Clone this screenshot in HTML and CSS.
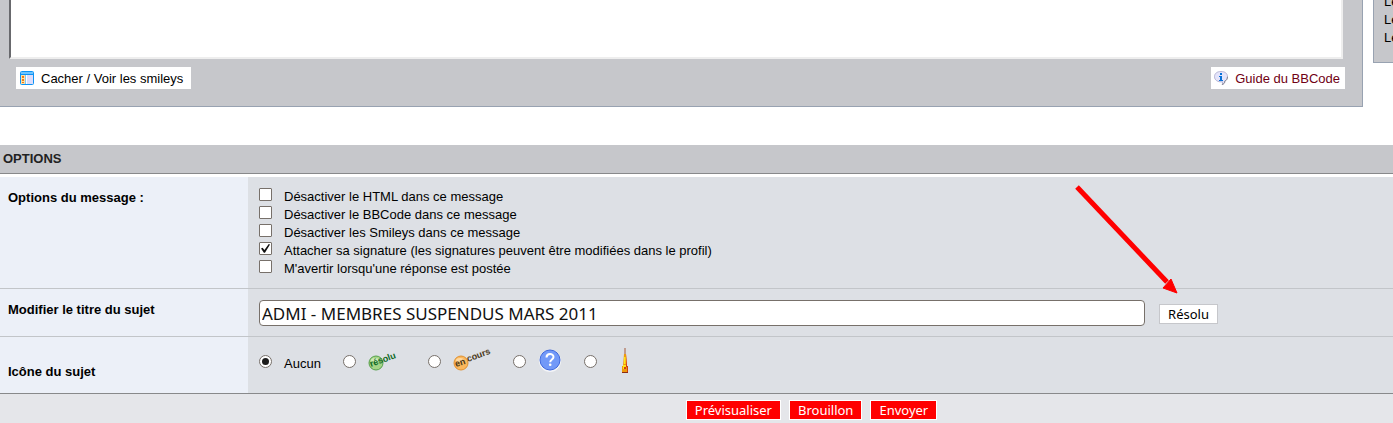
FILE: index.html
```html
<!DOCTYPE html>
<html lang="fr">
    <head>
        <meta charset="utf-8" />
        <title>Modifier le sujet</title>
        <link rel="stylesheet" href="styles.css">
    </head>
    <body>
        <form>
            <div class="top">
                <div class="editor">
                    <textarea class="message" aria-label="Message"></textarea>
                    <div class="editor-bar">
                        <button type="button" class="tool">
                            <svg width="14" height="14" viewBox="0 0 14 14">
                                <rect x="0.5" y="0.5" width="13" height="13" rx="1" fill="#fff" stroke="#0d93f5"/>
                                <path d="M1 1h12v2H1z" fill="#6cc4ff"/>
                                <path d="M1 3h12v1H1z" fill="#0d93f5"/>
                                <path d="M1 4h4v9H1z" fill="#ffe1a0"/>
                                <path d="M2 5h2v2H2zM2 8h2v2H2zM2 11h2v1H2z" fill="#f07818"/>
                                <path d="M5 4h1v9H5z" fill="#7cc6fa"/>
                                <path d="M7 4h6v9H7z" fill="#dcdcfa"/>
                            </svg>
                            <span>Cacher / Voir les smileys</span>
                        </button>
                        <a href="#" class="tool guide">
                            <svg width="14" height="14" viewBox="0 0 14 14">
                                <path d="M7 0.5c4 0 6.500 2 6.500 5.200 0 2.300-1.200 3.800-2.800 4.500 0.300 1.500-0.700 2.800-2.700 3.300 0.700-1 0.900-1.800 0.600-2.600C3.500 11.200 0.500 9 0.500 5.700 0.500 2.500 3 0.500 7 0.500z" fill="#e4e4fb" stroke="#b4b4d4"/>
                                <path d="M8 13.500c2-0.500 3-1.800 2.700-3.300 1.600-0.700 2.800-2.200 2.800-4.500" fill="none" stroke="#85858f"/>
                                <path d="M6 2h2v2H6zM5 5h3v4h1v1H5V9h1V6H5z" fill="#0872d8"/>
                            </svg>
                            <span>Guide du BBCode</span>
                        </a>
                    </div>
                </div>
                <div class="side">
                    <span>Le</span>
                    <span>Le</span>
                    <span>Le</span>
                </div>
            </div>

            <h2 class="title">OPTIONS</h2>

            <div class="row" role="group" aria-labelledby="message-options">
                <div class="name" id="message-options">Options du message :</div>
                <div class="value checks">
                    <label><input type="checkbox"><span>Désactiver le HTML dans ce message</span></label>
                    <label><input type="checkbox"><span>Désactiver le BBCode dans ce message</span></label>
                    <label><input type="checkbox"><span>Désactiver les Smileys dans ce message</span></label>
                    <label><input type="checkbox" checked><span>Attacher sa signature (les signatures peuvent être modifiées dans le profil)</span></label>
                    <label><input type="checkbox"><span>M'avertir lorsqu'une réponse est postée</span></label>
                </div>
            </div>

            <div class="row">
                <label class="name" for="subject">Modifier le titre du sujet</label>
                <div class="value subject-line">
                    <input type="text" class="subject" id="subject" value="ADMI - MEMBRES SUSPENDUS MARS 2011">
                    <div class="solved">
                        <button type="button" class="solved-button">Résolu</button>
                        <svg class="arrow" width="104" height="112" viewBox="0 0 104 112">
                            <path d="M3 3L93 98" stroke="#f00" stroke-width="5"/>
                            <path d="M103 109L89 104 97 95z" fill="#f00" stroke="#f00"/>
                        </svg>
                    </div>
                </div>
            </div>

            <div class="row last" role="group" aria-labelledby="topic-icon">
                <div class="name name-low" id="topic-icon">Icône du sujet</div>
                <div class="value icons">
                    <label><input type="radio" name="icon" checked><span>Aucun</span></label>
                    <label>
                        <input type="radio" name="icon" aria-label="Résolu">
                        <svg width="38" height="26" viewBox="0 0 38 26">
                            <circle cx="8" cy="15" r="7" fill="#a5d487" stroke="#55a04c"/>
                            <ellipse cx="7" cy="12" rx="4" ry="2" fill="#cdeab8"/>
                            <text class="stamp green" transform="translate(3 19) rotate(-20)">résolu</text>
                        </svg>
                    </label>
                    <label>
                        <input type="radio" name="icon" aria-label="En cours">
                        <svg width="38" height="26" viewBox="0 0 38 26">
                            <circle cx="8" cy="15" r="7" fill="#fbb75c" stroke="#df9233"/>
                            <ellipse cx="7" cy="12" rx="4" ry="2" fill="#ffd9a0"/>
                            <text class="stamp brown" transform="translate(3 19) rotate(-18)">en</text>
                            <text class="stamp brown" transform="translate(15 14) rotate(-20)">cours</text>
                        </svg>
                    </label>
                    <label>
                        <input type="radio" name="icon" aria-label="Question">
                        <svg width="24" height="26" viewBox="0 0 24 26">
                            <circle cx="12" cy="13" r="11" fill="#f4f5f8"/>
                            <circle cx="12" cy="12" r="10" fill="#7299f8" stroke="#3f68dc"/>
                            <path d="M8.500 9.500c0-4.500 7-4.500 7-0.500 0 2.500-3.300 2.500-3.300 5.200" fill="none" stroke="#fff" stroke-width="2"/>
                            <circle cx="12.200" cy="16.800" r="1.300" fill="#fff"/>
                        </svg>
                    </label>
                    <label>
                        <input type="radio" name="icon" aria-label="Fusée">
                        <svg width="32" height="26" viewBox="0 0 32 26">
                            <path d="M15.500 0h1v7h-1z" fill="#a3583a"/>
                            <path d="M15 6h2l1 12h1v7h-6v-7h1z" fill="#ee9a0c"/>
                            <path d="M15 9h1.500v7H15zM14 17h3v4h-3z" fill="#ffe51a"/>
                            <path d="M17 6l1 12h1v7h-1V19h-1zM15 19h2v2h-2z" fill="#d13a12"/>
                            <path d="M13 24h6v1h-6z" fill="#8c2d12"/>
                        </svg>
                    </label>
                </div>
            </div>

            <div class="actions">
                <button type="button">Prévisualiser</button>
                <button type="button">Brouillon</button>
                <button type="submit">Envoyer</button>
            </div>
        </form>
    </body>
</html>
```
FILE: styles.css
```css
body {
    margin: 0;
    background: #fff;
    color: #000;
    font: 13px/18px "Liberation Sans", Arial, sans-serif;
    overflow: hidden;
}
svg {
    display: block;
    flex: none;
}
input {
    margin: 0;
    box-sizing: border-box;
}
.top {
    display: flex;
    align-items: flex-start;
    gap: 10px;
    margin-bottom: 38px;
}
.editor {
    flex: 1;
    background: #c6c7cb;
    border: solid #98a2b1;
    border-width: 0 1px 1px 0;
    padding: 0 17px 17px 9px;
}
.message {
    display: block;
    box-sizing: border-box;
    width: calc(100% - 2px);
    height: 59px;
    margin: 0 0 8px;
    background: #fff;
    border: 2px solid #eee;
    border-left-color: #68696d;
    border-top: 0;
    resize: none;
    outline: none;
}
.editor-bar {
    display: flex;
    justify-content: space-between;
    padding-left: 7px;
}
.tool {
    display: flex;
    align-items: center;
    gap: 7px;
    height: 22px;
    padding: 0 8px 0 4px;
    border: 0;
    background: #fff;
    color: #000;
    font: inherit;
    text-decoration: none;
}
.tool span {
    padding-top: 2px;
}
.guide {
    color: #700014;
    padding: 0 5px 0 3px;
}
.side {
    display: flex;
    flex-direction: column;
    box-sizing: border-box;
    width: 20px;
    margin-top: -7px;
    padding: 0 0 15px 10px;
    background: #c6c7cb;
    border: solid #98a2b1;
    border-width: 0 0 1px 1px;
    overflow: hidden;
}
.title {
    margin: 0 0 3px;
    padding: 5px 3px;
    background: #c6c7cb;
    border-bottom: 1px solid #88898b;
    color: #222;
    font-size: 13px;
    line-height: 18px;
}
.row {
    display: flex;
    background: #dde0e5;
    border-bottom: 1px solid #c2c5c9;
}
.name {
    box-sizing: border-box;
    width: 248px;
    padding: 12px 8px;
    background: #ecf0f8;
    font-weight: bold;
}
.name-low {
    padding-top: 26px;
}
.value {
    flex: 1;
    padding: 11px;
}
.checks {
    padding-bottom: 10px;
}
.checks label, .icons label {
    display: flex;
    align-items: center;
    gap: 12px;
}
.checks input {
    align-self: flex-start;
}
input[type=checkbox], input[type=radio] {
    display: grid;
    place-content: center;
    flex: none;
    appearance: none;
    width: 13px;
    height: 13px;
    background: #fff;
    border: 1px solid #77706a;
    border-radius: 1px;
}
input[type=radio] {
    border-radius: 50%;
}
input[type=checkbox]:checked::before {
    content: "";
    width: 9px;
    height: 9px;
    background: #111;
    clip-path: polygon(0 50%, 18% 42%, 38% 66%, 86% 0, 100% 6%, 44% 96%, 32% 96%);
}
input[type=radio]:checked::before {
    content: "";
    width: 7px;
    height: 7px;
    border-radius: 50%;
    background: #1c1c1c;
}
.checks span {
    line-height: 18px;
}
.subject-line {
    display: flex;
    align-items: center;
    gap: 14px;
    padding: 11px 175px 10px 11px;
}
.subject {
    flex: 1;
    height: 26px;
    padding: 0 2px;
    background: #fff;
    border: 1px solid #77706a;
    border-radius: 4px;
    color: #111;
    font: 17px "Noto Sans", sans-serif;
}
.solved {
    position: relative;
}
.solved-button {
    display: block;
    height: 20px;
    margin-top: 2px;
    padding: 0 8px;
    background: #fff;
    border: 1px solid #c6c7cb;
    color: #000;
    font: 13px/18px "Noto Sans", sans-serif;
}
.arrow {
    position: absolute;
    right: 40px;
    bottom: 28px;
}
.last {
    border-bottom: 0;
}
.icons {
    display: flex;
    align-items: flex-start;
    gap: 22px;
}
.icons span {
    padding-top: 5px;
}
.icons label {
    height: 26px;
}
.stamp {
    font: bold 9px "Liberation Sans", Arial, sans-serif;
}
.green {
    fill: #0f6a26;
}
.brown {
    fill: #4a3818;
}
.actions {
    display: flex;
    justify-content: center;
    gap: 8px;
    padding: 6px 0 3px 230px;
    background: #e5e6ea;
    border-top: 1px solid #88898b;
}
.actions button {
    height: 20px;
    padding: 0 8px;
    background: #f00;
    border: 1px solid #fff;
    color: #fff;
    font: 13px/18px "Noto Sans", sans-serif;
}
```
